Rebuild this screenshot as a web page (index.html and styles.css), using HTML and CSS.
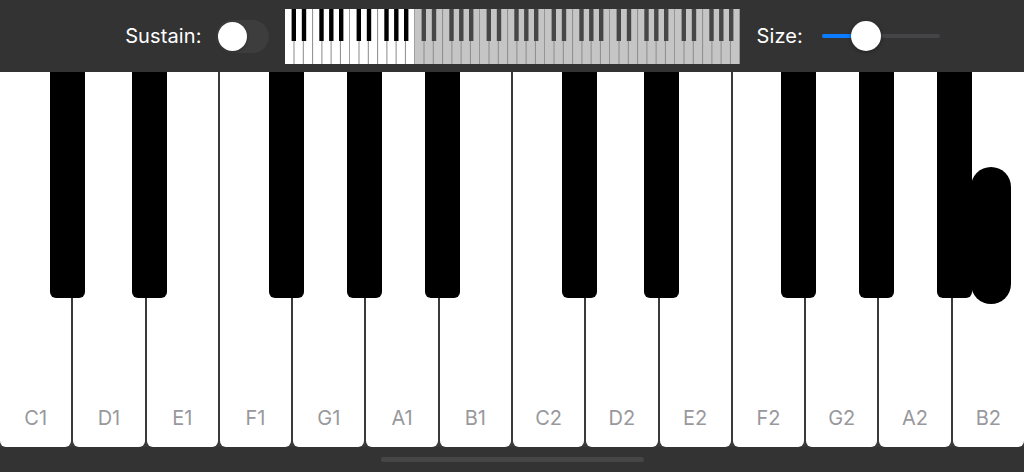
FILE: index.html
```html
<!DOCTYPE html>
<html lang="en">
<head>
<meta charset="utf-8">
<title>Piano</title>
<link rel="stylesheet" href="styles.css">
</head>
<body>
<div class="app">
  <header class="topbar">
    <div class="group group-left">
      <span class="label">Sustain:</span>
      <div class="switch"><div class="switch-knob"></div></div>
    </div>
    <div class="mini">
      <svg width="455" height="55" viewBox="0 0 455 55" xmlns="http://www.w3.org/2000/svg">
        <defs>
          <pattern id="oct" width="65" height="55" patternUnits="userSpaceOnUse">
            <rect x="0" y="0" width="65" height="55" fill="#ffffff"/>
            <rect x="8.5" y="0" width="1" height="55" fill="#8a8a8a"/>
            <rect x="17.8" y="0" width="1" height="55" fill="#8a8a8a"/>
            <rect x="27.1" y="0" width="1" height="55" fill="#8a8a8a"/>
            <rect x="36.4" y="0" width="1" height="55" fill="#8a8a8a"/>
            <rect x="45.6" y="0" width="1" height="55" fill="#8a8a8a"/>
            <rect x="54.9" y="0" width="1" height="55" fill="#8a8a8a"/>
            <rect x="64.2" y="0" width="1" height="55" fill="#8a8a8a"/>
            <rect x="6.6" y="0" width="4.4" height="32" fill="#000"/>
            <rect x="16.8" y="0" width="4.4" height="32" fill="#000"/>
            <rect x="34.3" y="0" width="4.4" height="32" fill="#000"/>
            <rect x="44.1" y="0" width="4.4" height="32" fill="#000"/>
            <rect x="54.0" y="0" width="4.4" height="32" fill="#000"/>
          </pattern>
        </defs>
        <rect x="0" y="0" width="455" height="55" fill="url(#oct)"/>
        <rect x="130" y="0" width="325" height="55" fill="rgba(140,140,140,0.5)"/>
      </svg>
    </div>
    <div class="group group-right">
      <span class="label">Size:</span>
      <div class="slider">
        <div class="slider-track"></div>
        <div class="slider-fill"></div>
        <div class="slider-thumb"></div>
      </div>
    </div>
  </header>

  <main class="keyboard">
    <div class="whites">
      <div class="white"><span class="note">C1</span></div>
      <div class="white"><span class="note">D1</span></div>
      <div class="white"><span class="note">E1</span></div>
      <div class="white"><span class="note">F1</span></div>
      <div class="white"><span class="note">G1</span></div>
      <div class="white"><span class="note">A1</span></div>
      <div class="white"><span class="note">B1</span></div>
      <div class="white"><span class="note">C2</span></div>
      <div class="white"><span class="note">D2</span></div>
      <div class="white"><span class="note">E2</span></div>
      <div class="white"><span class="note">F2</span></div>
      <div class="white"><span class="note">G2</span></div>
      <div class="white"><span class="note">A2</span></div>
      <div class="white"><span class="note">B2</span></div>
    </div>
    <div class="black" style="left:50px"></div>
    <div class="black" style="left:132px"></div>
    <div class="black" style="left:269px"></div>
    <div class="black" style="left:347px"></div>
    <div class="black" style="left:425px"></div>
    <div class="black" style="left:562px"></div>
    <div class="black" style="left:644px"></div>
    <div class="black" style="left:781px"></div>
    <div class="black" style="left:859px"></div>
    <div class="black" style="left:937px"></div>
    <div class="touch"></div>
  </main>

  <footer class="homebar"><div class="home-indicator"></div></footer>
</div>
</body>
</html>
```

FILE: styles.css
```css
* { box-sizing: border-box; }

html, body {
  margin: 0;
  padding: 0;
  background: #333333;
}

.app {
  width: 1024px;
  height: 472px;
  display: flex;
  flex-direction: column;
  background: #333333;
  font-family: Inter, "Liberation Sans", sans-serif;
  overflow: hidden;
}

.topbar {
  height: 72px;
  flex: none;
  display: grid;
  grid-template-columns: 1fr auto 1fr;
  align-items: center;
}

.group {
  display: flex;
  align-items: center;
}

.group-left {
  justify-content: flex-end;
  gap: 14px;
  margin-right: 16px;
}

.group-right {
  justify-content: flex-start;
  gap: 19px;
  margin-left: 17px;
}

.label {
  color: #ffffff;
  font-size: 20px;
  letter-spacing: 0.1px;
}

.switch {
  width: 53px;
  height: 33px;
  border-radius: 17px;
  background: #3d3d3d;
  padding: 2px;
  display: flex;
  align-items: center;
}

.switch-knob {
  width: 29px;
  height: 29px;
  border-radius: 50%;
  background: #ffffff;
  box-shadow: 0 1px 3px rgba(0, 0, 0, 0.3);
}

.mini {
  width: 455px;
  height: 55px;
  display: flex;
}

.mini svg { display: block; }

.slider {
  position: relative;
  width: 118px;
  height: 30px;
}

.slider-track {
  position: absolute;
  left: 0;
  right: 0;
  top: 13px;
  height: 4px;
  border-radius: 2px;
  background: #444446;
}

.slider-fill {
  position: absolute;
  left: 0;
  top: 13px;
  width: 44px;
  height: 4px;
  border-radius: 2px;
  background: #0a7cff;
}

.slider-thumb {
  position: absolute;
  left: 29px;
  top: 0;
  width: 30px;
  height: 30px;
  border-radius: 50%;
  background: #ffffff;
  box-shadow: 0 1px 4px rgba(0, 0, 0, 0.35);
}

.keyboard {
  position: relative;
  height: 375px;
  flex: none;
}

.whites {
  display: flex;
  gap: 2px;
  height: 100%;
  background: #3a3a3a;
}

.white {
  flex: 1;
  background: #ffffff;
  border-radius: 0 0 6px 6px;
  display: flex;
  align-items: flex-end;
  justify-content: center;
  padding-bottom: 19px;
}

.note {
  color: #98989d;
  font-size: 20px;
  line-height: 20px;
}

.black {
  position: absolute;
  top: 0;
  width: 35px;
  height: 226px;
  background: #000000;
  border-radius: 0 0 6px 6px;
}

.touch {
  position: absolute;
  left: 971px;
  top: 95px;
  width: 40px;
  height: 137px;
  border-radius: 20px;
  background: #000000;
}

.homebar {
  flex: 1;
  display: flex;
  justify-content: center;
  padding-top: 10px;
}

.home-indicator {
  width: 263px;
  height: 5px;
  border-radius: 3px;
  background: #464646;
}
```
